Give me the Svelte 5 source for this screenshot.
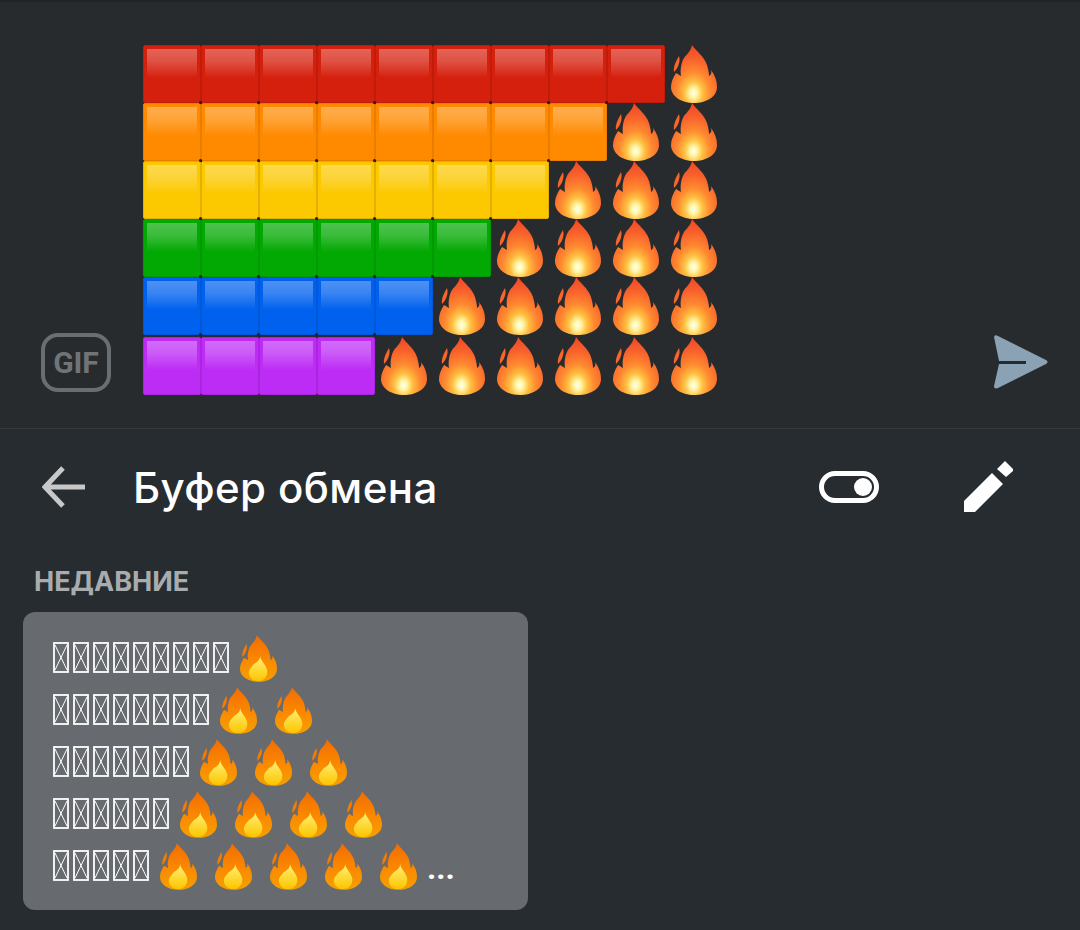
<script>
  const rows = [
    { color: '#d6200e', edge: '#c01c0c', blocks: 9 },
    { color: '#ff8a00', edge: '#e87d00', blocks: 8 },
    { color: '#fcc800', edge: '#e3b000', blocks: 7 },
    { color: '#02a902', edge: '#029a02', blocks: 6 },
    { color: '#0061ee', edge: '#0057d8', blocks: 5 },
    { color: '#bd2cf5', edge: '#ab24e0', blocks: 4 }
  ];

  // boxes = missing glyph squares, flames = emoji after them
  const recent = [
    { boxes: 9, flames: 1 },
    { boxes: 8, flames: 2 },
    { boxes: 7, flames: 3 },
    { boxes: 6, flames: 4 },
    { boxes: 5, flames: 5, more: true }
  ];

  const flamePath =
    'M21 0C25 6 33 11 36 20C37 24 38 27 38 31C40 30 41 28 40 25C44 30 46 36 46 42C46 52 35 58 23 58C10 58 0 51 0 42C0 37 2 33 5 28C7 29 8 30 10 31C9 25 10 18 13 13C16 9 20 6 21 0Z';
  const tonguePath = 'M8 11C5 16 2 22 3 27C6 24 10 18 8 11Z';
  const corePath =
    'M25 26C26 33 33 37 34 45C34 52 30 57 23 57C15 57 11 52 11 46C11 42 14 40 17 36C21 34 25 31 25 26Z';
</script>

{#snippet flame(kind)}
  <svg class="flame {kind}" viewBox="0 0 46 58" aria-hidden="true">
    {#if kind === 'big'}
      <path d={flamePath} fill="url(#bigFire)" />
      <path d={tonguePath} fill="#f8662c" />
    {:else}
      <path d={flamePath} fill="url(#smallOuter)" />
      <path d={tonguePath} fill="#f57c00" />
      <path d={corePath} fill="url(#smallCore)" />
    {/if}
  </svg>
{/snippet}

{#snippet tofu()}
  <svg class="tofu" viewBox="0 0 16 31" aria-hidden="true">
    <rect x="1" y="1" width="14" height="29" fill="none" stroke="#fff" stroke-width="1.8" />
    <path d="M2 3L14 28M14 3L2 28" fill="none" stroke="#fff" stroke-width="1" />
  </svg>
{/snippet}

<svg class="defs" width="0" height="0" aria-hidden="true">
  <defs>
    <radialGradient id="bigFire" cx="0.49" cy="0.83" r="0.8">
      <stop offset="0" stop-color="#fffff0" />
      <stop offset="0.1" stop-color="#fff6a8" />
      <stop offset="0.25" stop-color="#ffc040" />
      <stop offset="0.45" stop-color="#ff8a30" />
      <stop offset="0.75" stop-color="#f8602c" />
      <stop offset="1" stop-color="#f04a26" />
    </radialGradient>
    <linearGradient id="smallOuter" x1="0" y1="0" x2="0" y2="1">
      <stop offset="0" stop-color="#f26c00" />
      <stop offset="0.6" stop-color="#fb8c00" />
      <stop offset="1" stop-color="#f3a000" />
    </linearGradient>
    <linearGradient id="smallCore" x1="0" y1="0" x2="0" y2="1">
      <stop offset="0" stop-color="#fff176" />
      <stop offset="1" stop-color="#fdc400" />
    </linearGradient>
  </defs>
</svg>

<main class="screen">
  <section class="composer">
    <div class="gif">GIF</div>

    <div class="message">
      {#each rows as row}
        <div class="row">
          {#each Array(row.blocks) as _}
            <div class="block" style="background-color: {row.color}; border-color: {row.edge}"></div>
          {/each}
          {#each Array(10 - row.blocks) as _}
            {@render flame('big')}
          {/each}
        </div>
      {/each}
    </div>

    <svg class="send" viewBox="0 0 56 56" aria-label="Send">
      <path
        d="M2 3C3 1 4 1 6 2L54 26C56 27 56 29 54 30L6 54C3 55 2 54 2 52L7 30H34V27H7Z"
        fill="#8ba1b4"
      />
    </svg>
  </section>

  <header class="toolbar">
    <svg class="back" viewBox="0 0 44 44" aria-label="Back">
      <path d="M43 22H4M21 3L3 22L21 41" fill="none" stroke="#c6c8c9" stroke-width="5" />
    </svg>
    <h1>Буфер обмена</h1>
    <svg class="toggle" viewBox="0 0 60 32" aria-label="Toggle">
      <rect x="2.5" y="2.5" width="55" height="27" rx="13.5" fill="none" stroke="#fff" stroke-width="5" />
      <circle cx="44" cy="16" r="9" fill="#fff" />
    </svg>
    <svg class="edit" viewBox="0 0 50 54" aria-label="Edit">
      <path d="M1 40L29 12L40 23L12 51H1ZM34 8L42 0L51 9L43 16Z" fill="#fff" />
    </svg>
  </header>

  <h2>НЕДАВНИЕ</h2>

  <div class="clip">
    {#each recent as line}
      <div class="clip-line">
        <div class="boxes">
          {#each Array(line.boxes) as _}
            {@render tofu()}
          {/each}
        </div>
        {#each Array(line.flames) as _}
          {@render flame('small')}
        {/each}
        {#if line.more}
          <span class="more">...</span>
        {/if}
      </div>
    {/each}
  </div>
</main>

<style>
  :global(body) {
    background: #272c30;
    font-family: Roboto, 'Noto Sans', sans-serif;
  }

  .defs {
    position: absolute;
  }

  .screen {
    width: 1080px;
    height: 930px;
    overflow: hidden;
    background: #272c30;
  }

  .composer {
    display: flex;
    align-items: flex-end;
    height: 429px;
    box-sizing: border-box;
    padding: 45px 32px 33px 41px;
    background: #282b2e;
    border-top: 2px solid #1f2326;
    border-bottom: 1px solid #36393c;
  }

  .gif {
    display: flex;
    align-items: center;
    justify-content: center;
    box-sizing: border-box;
    width: 70px;
    height: 59px;
    margin-bottom: 3px;
    border: 4px solid #6b6e70;
    border-radius: 17px;
    color: #717476;
    font-size: 30px;
    font-weight: 700;
  }

  .message {
    margin-left: 32px;
    margin-top: -2px;
  }

  .row {
    display: flex;
    height: 58px;
  }

  .row:last-child {
    margin-top: 2px;
  }

  .block {
    position: relative;
    box-sizing: border-box;
    width: 58px;
    height: 58px;
    border: 1px solid;
    border-radius: 2px;
  }

  .block::before {
    content: '';
    position: absolute;
    top: 3px;
    left: 3px;
    right: 3px;
    bottom: 3px;
    background: linear-gradient(rgba(255, 255, 255, 0.3), rgba(255, 255, 255, 0.22) 25%, rgba(255, 255, 255, 0) 58%);
  }

  /* little dark dots where four blocks meet */
  .row:not(:last-child) .block:not(:last-of-type)::after {
    content: '';
    position: absolute;
    right: -2px;
    bottom: -2px;
    width: 3px;
    height: 3px;
    border-radius: 50%;
    background: #2a1c10;
    z-index: 1;
  }

  .flame {
    flex: none;
  }

  .flame.big {
    width: 46px;
    height: 58px;
    margin: 0 6px;
  }

  .flame.small {
    width: 37px;
    height: 47px;
    margin-right: 18px;
  }

  .send {
    width: 56px;
    height: 56px;
    margin-left: auto;
    margin-bottom: 5px;
  }

  .toolbar {
    display: flex;
    align-items: center;
    height: 116px;
    padding-left: 42px;
  }

  .back {
    width: 44px;
    height: 44px;
  }

  h1 {
    margin: 0 0 0 47px;
    color: #fff;
    font-family: Inter, Roboto, sans-serif;
    font-size: 42px;
    font-weight: 500;
    letter-spacing: 0.4px;
  }

  .toggle {
    width: 60px;
    height: 32px;
    margin-left: auto;
    margin-right: 84px;
  }

  .edit {
    width: 50px;
    height: 54px;
    margin-right: 67px;
    margin-top: 2px;
  }

  h2 {
    margin: 22px 0 0 34px;
    height: 45px;
    color: #a8acaf;
    font-family: Inter, Roboto, sans-serif;
    font-size: 27px;
    font-weight: 700;
    line-height: 30px;
  }

  .clip {
    box-sizing: border-box;
    width: 505px;
    height: 298px;
    margin-left: 23px;
    padding: 23px 0 0 30px;
    background: #676b6f;
    border-radius: 12px;
  }

  .clip-line {
    display: flex;
    align-items: flex-start;
    height: 52px;
  }

  .boxes {
    display: flex;
    gap: 4px;
    margin-top: 7px;
    margin-right: 11px;
  }

  .tofu {
    width: 16px;
    height: 31px;
  }

  .more {
    margin-top: 6px;
    margin-left: -8px;
    color: #fff;
    font-size: 32px;
    line-height: 38px;
    font-weight: 700;
  }
</style>
